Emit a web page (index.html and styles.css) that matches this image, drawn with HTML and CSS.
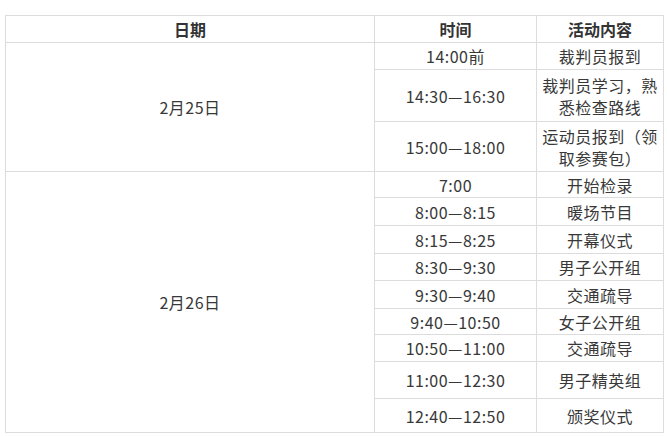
FILE: index.html
```html
<!DOCTYPE html>
<html lang="zh-CN">
<head>
<meta charset="utf-8">
<title>日程安排</title>
<link rel="stylesheet" href="styles.css">
</head>
<body>
<table class="schedule">
  <colgroup>
    <col class="c-date">
    <col class="c-time">
    <col class="c-act">
  </colgroup>
  <thead>
    <tr class="h27">
      <th>日期</th>
      <th>时间</th>
      <th>活动内容</th>
    </tr>
  </thead>
  <tbody>
    <tr class="h27">
      <td rowspan="3">2月25日</td>
      <td>14:00前</td>
      <td>裁判员报到</td>
    </tr>
    <tr class="h52">
      <td>14:30—16:30</td>
      <td>裁判员学习，熟悉检查路线</td>
    </tr>
    <tr class="h50">
      <td>15:00—18:00</td>
      <td>运动员报到（领取参赛包）</td>
    </tr>
    <tr class="h26">
      <td rowspan="9">2月26日</td>
      <td>7:00</td>
      <td>开始检录</td>
    </tr>
    <tr class="h28">
      <td>8:00—8:15</td>
      <td>暖场节目</td>
    </tr>
    <tr class="h28">
      <td>8:15—8:25</td>
      <td>开幕仪式</td>
    </tr>
    <tr class="h27">
      <td>8:30—9:30</td>
      <td>男子公开组</td>
    </tr>
    <tr class="h28">
      <td>9:30—9:40</td>
      <td>交通疏导</td>
    </tr>
    <tr class="h26">
      <td>9:40—10:50</td>
      <td>女子公开组</td>
    </tr>
    <tr class="h27">
      <td>10:50—11:00</td>
      <td>交通疏导</td>
    </tr>
    <tr class="h37">
      <td>11:00—12:30</td>
      <td>男子精英组</td>
    </tr>
    <tr class="h34">
      <td>12:40—12:50</td>
      <td>颁奖仪式</td>
    </tr>
  </tbody>
</table>
</body>
</html>
```
FILE: styles.css
```css
html, body {
  margin: 0;
  padding: 0;
  background: #ffffff;
}

body {
  padding: 15px 5px 0 5px;
  font-family: "Noto Sans CJK SC", "Noto Sans", sans-serif;
  font-size: 16px;
  color: #383838;
}

.schedule {
  border-collapse: collapse;
  width: 658px;
  table-layout: fixed;
}

.c-date { width: 369px; }
.c-time { width: 162px; }
.c-act  { width: 127px; }

.schedule th,
.schedule td {
  border: 1px solid #dcdcdc;
  text-align: center;
  vertical-align: middle;
  padding: 0 5px;
  line-height: 22px;
}

.schedule td {
  letter-spacing: 0.5px;
}

.schedule th {
  font-weight: bold;
  color: #333333;
}

.h26 { height: 26px; }
.h27 { height: 27px; }
.h28 { height: 28px; }
.h34 { height: 34px; }
.h37 { height: 37px; }
.h50 { height: 50px; }
.h52 { height: 52px; }
```
